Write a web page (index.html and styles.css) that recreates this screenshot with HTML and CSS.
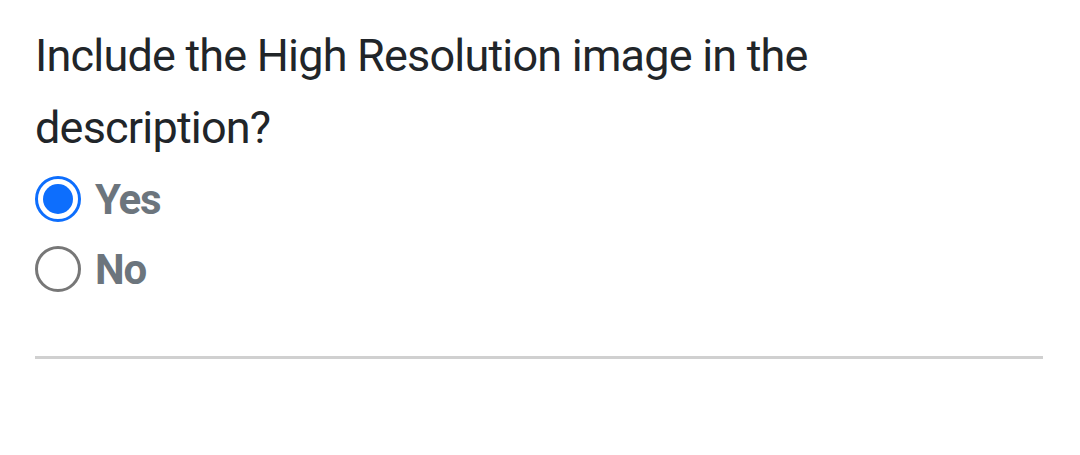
FILE: index.html
```html
<!DOCTYPE html>
<html lang="en">
<head>
  <meta charset="UTF-8">
  <title>High Resolution image</title>
  <link rel="stylesheet" href="styles.css">
</head>
<body>

  <div class="question">
    <p class="question-text">Include the High Resolution image in the description?</p>

    <label class="option">
      <input type="radio" name="hires" value="yes" checked>
      <span class="dot"></span>
      <span class="option-label">Yes</span>
    </label>

    <label class="option">
      <input type="radio" name="hires" value="no">
      <span class="dot"></span>
      <span class="option-label">No</span>
    </label>
  </div>

  <hr class="divider">

</body>
</html>
```

FILE: styles.css
```css
body {
  margin: 0;
  padding: 0 37px 0 35px;
  background: #ffffff;
  font-family: Roboto, "Open Sans", sans-serif;
  color: #212529;
}

.question {
  padding-top: 20px;
}

.question-text {
  margin: 0;
  max-width: 850px;
  font-size: 45px;
  line-height: 72px;
  letter-spacing: -0.8px;
  color: #212529;
}

.option {
  display: flex;
  align-items: center;
  gap: 14px;
  height: 70px;
  cursor: pointer;
}

.option input {
  display: none;
}

.dot {
  width: 40px;
  height: 40px;
  border: 3px solid #777777;
  border-radius: 50%;
  box-sizing: content-box;
  display: flex;
  align-items: center;
  justify-content: center;
}

.option input:checked + .dot {
  border-color: #0d6efd;
}

.option input:checked + .dot::after {
  content: "";
  width: 30px;
  height: 30px;
  border-radius: 50%;
  background: #0d6efd;
}

.option-label {
  font-size: 42px;
  font-weight: 700;
  letter-spacing: -1.2px;
  color: #6c757d;
}

.divider {
  margin: 52px 0 0;
  border: none;
  border-top: 3px solid #d0d0d0;
}
```
